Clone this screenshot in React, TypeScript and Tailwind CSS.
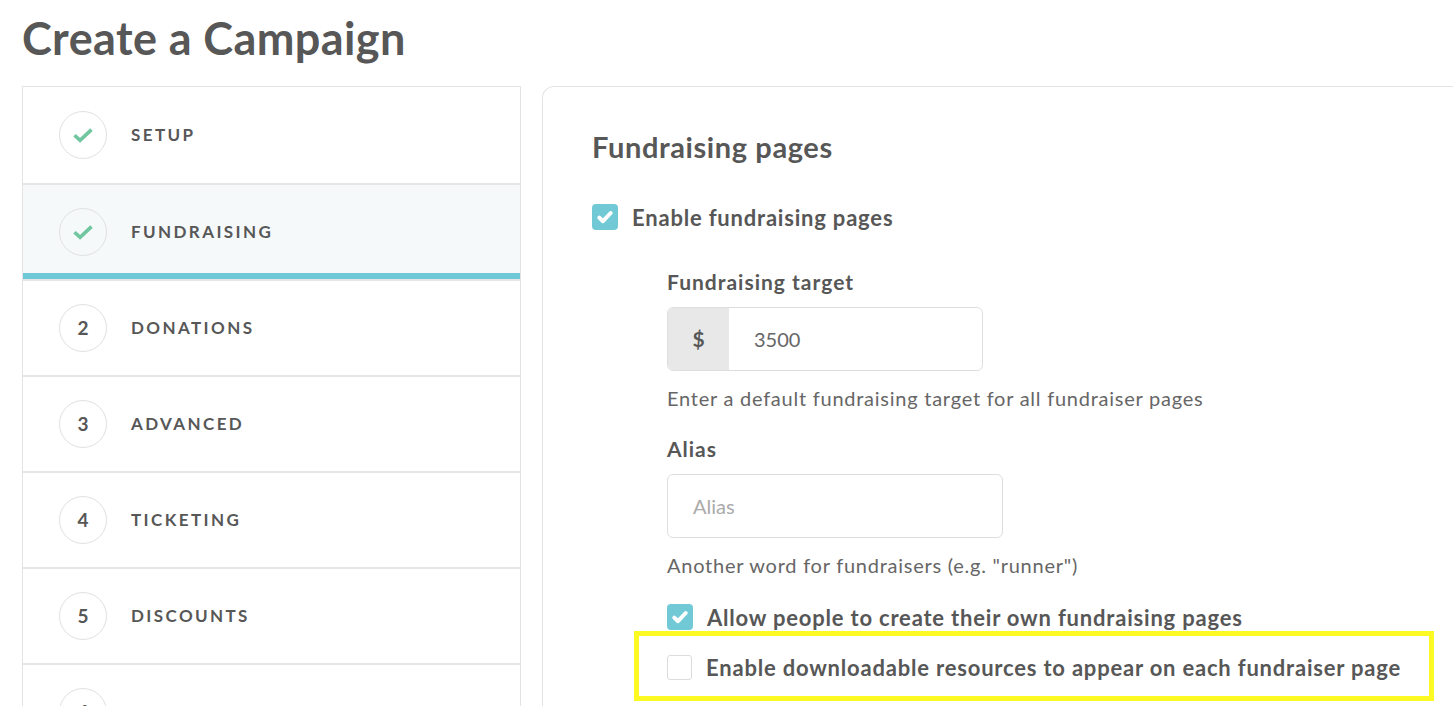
const steps = [
  { key: "setup", label: "Setup", done: true },
  { key: "fundraising", label: "Fundraising", done: true, active: true },
  { key: "donations", label: "Donations", num: 2 },
  { key: "advanced", label: "Advanced", num: 3 },
  { key: "ticketing", label: "Ticketing", num: 4 },
  { key: "discounts", label: "Discounts", num: 5 },
  { key: "fitness", label: "Fitness", num: 6 },
];

function Tick({ on }: { on: boolean }) {
  if (!on) {
    return <span className="block w-[25px] h-[25px] shrink-0 rounded-[3px] border border-[#dcdcdc] bg-white" />;
  }
  return (
    <span className="flex w-[26px] h-[26px] shrink-0 items-center justify-center rounded-[4px] bg-[#71c9d6]">
      <svg width="18" height="18" viewBox="0 0 18 18" fill="none">
        <path d="M3.3 9.6l3.7 3.6L14.7 5" stroke="white" strokeWidth="4" strokeLinecap="round" strokeLinejoin="round" />
      </svg>
    </span>
  );
}

function Step({ s, first }: { s: (typeof steps)[number]; first?: boolean }) {
  return (
    <div className="border-b-2 border-[#e6e6e6]">
      <div
        className={`flex items-center pl-[36px] ${first ? "h-[96px]" : s.active ? "h-[88px] pt-[6px]" : "h-[94px]"} ${
          s.active ? "bg-[#f5f9fa]" : "bg-white"
        }`}
      >
        <span className="flex w-[48px] h-[48px] items-center justify-center rounded-full border border-[#e1e1e1] text-[19px] font-bold">
          {s.done ? (
            <svg width="22" height="16" viewBox="0 0 22 16" fill="none">
              <path d="M2.5 8.2l5.6 5.2L19.5 2.6" stroke="#6fc69f" strokeWidth="3.6" strokeLinejoin="miter" />
            </svg>
          ) : (
            s.num
          )}
        </span>
        <span className="ml-[24px] text-[17px] font-bold uppercase tracking-[2.4px]">{s.label}</span>
      </div>
      {s.active && <div className="h-[6px] bg-[#6fc8d6]" />}
    </div>
  );
}

export default function App() {
  return (
    <div className="h-[706px] w-full overflow-hidden bg-white pl-[22px] text-[#575757] font-['Lato',sans-serif]">
      <div className="h-[86px]">
        <h1 className="pt-[14px] text-[45px] leading-[48px] font-bold tracking-[0.4px]">Create a Campaign</h1>
      </div>

      <div className="flex gap-[21px]">
        <aside className="w-[499px] shrink-0 border-x border-t border-[#e3e3e3]">
          {steps.map((s, i) => (
            <Step key={s.key} s={s} first={i === 0} />
          ))}
        </aside>

        <section className="w-[1000px] shrink-0 rounded-tl-[12px] border-l border-t border-[#e3e3e3] pl-[49px] pt-[44px]">
          <h2 className="text-[29px] leading-[32px] font-bold tracking-[0.6px]">Fundraising pages</h2>

          <label className="mt-[41px] flex h-[26px] items-center gap-[14px]">
            <Tick on />
            <span className="text-[22px] font-bold tracking-[0.8px]">Enable fundraising pages</span>
          </label>

          <div className="ml-[75px]">
            <div className="mt-[40px] text-[21px] leading-[24px] font-bold tracking-[1px]">Fundraising target</div>
            <div className="mt-[13px] flex h-[64px] w-[316px] overflow-hidden rounded-[6px] border border-[#dedede]">
              <span className="flex w-[61px] items-center justify-center bg-[#e8e8e8] text-[21px] font-bold">$</span>
              <span className="flex items-center pl-[25px] text-[20px] text-[#666]">3500</span>
            </div>
            <p className="mt-[15px] text-[20px] leading-[24px] tracking-[0.75px] text-[#666]">
              Enter a default fundraising target for all fundraiser pages
            </p>

            <div className="mt-[27px] text-[21px] leading-[24px] font-bold tracking-[1px]">Alias</div>
            <div className="mt-[13px] flex h-[64px] w-[336px] items-center rounded-[6px] border border-[#dedede] pl-[25px] text-[20px] text-[#aaaaaa]">
              Alias
            </div>
            <p className="mt-[15px] text-[20px] leading-[24px] tracking-[0.75px] text-[#666]">
              Another word for fundraisers (e.g. "runner")
            </p>

            <label className="mt-[27px] flex h-[26px] items-center gap-[14px]">
              <Tick on />
              <span className="text-[22px] font-bold tracking-[0.8px]">Allow people to create their own fundraising pages</span>
            </label>

            <div className="-ml-[33px] mt-[1px] w-[800px] border-[5px] border-[#fdf923] pl-[28px] pt-[18px] pb-[16px]">
              <label className="flex h-[26px] items-center gap-[14px]">
                <Tick on={false} />
                <span className="text-[22px] font-bold tracking-[0.8px]">
                  Enable downloadable resources to appear on each fundraiser page
                </span>
              </label>
            </div>
          </div>
        </section>
      </div>
    </div>
  );
}
